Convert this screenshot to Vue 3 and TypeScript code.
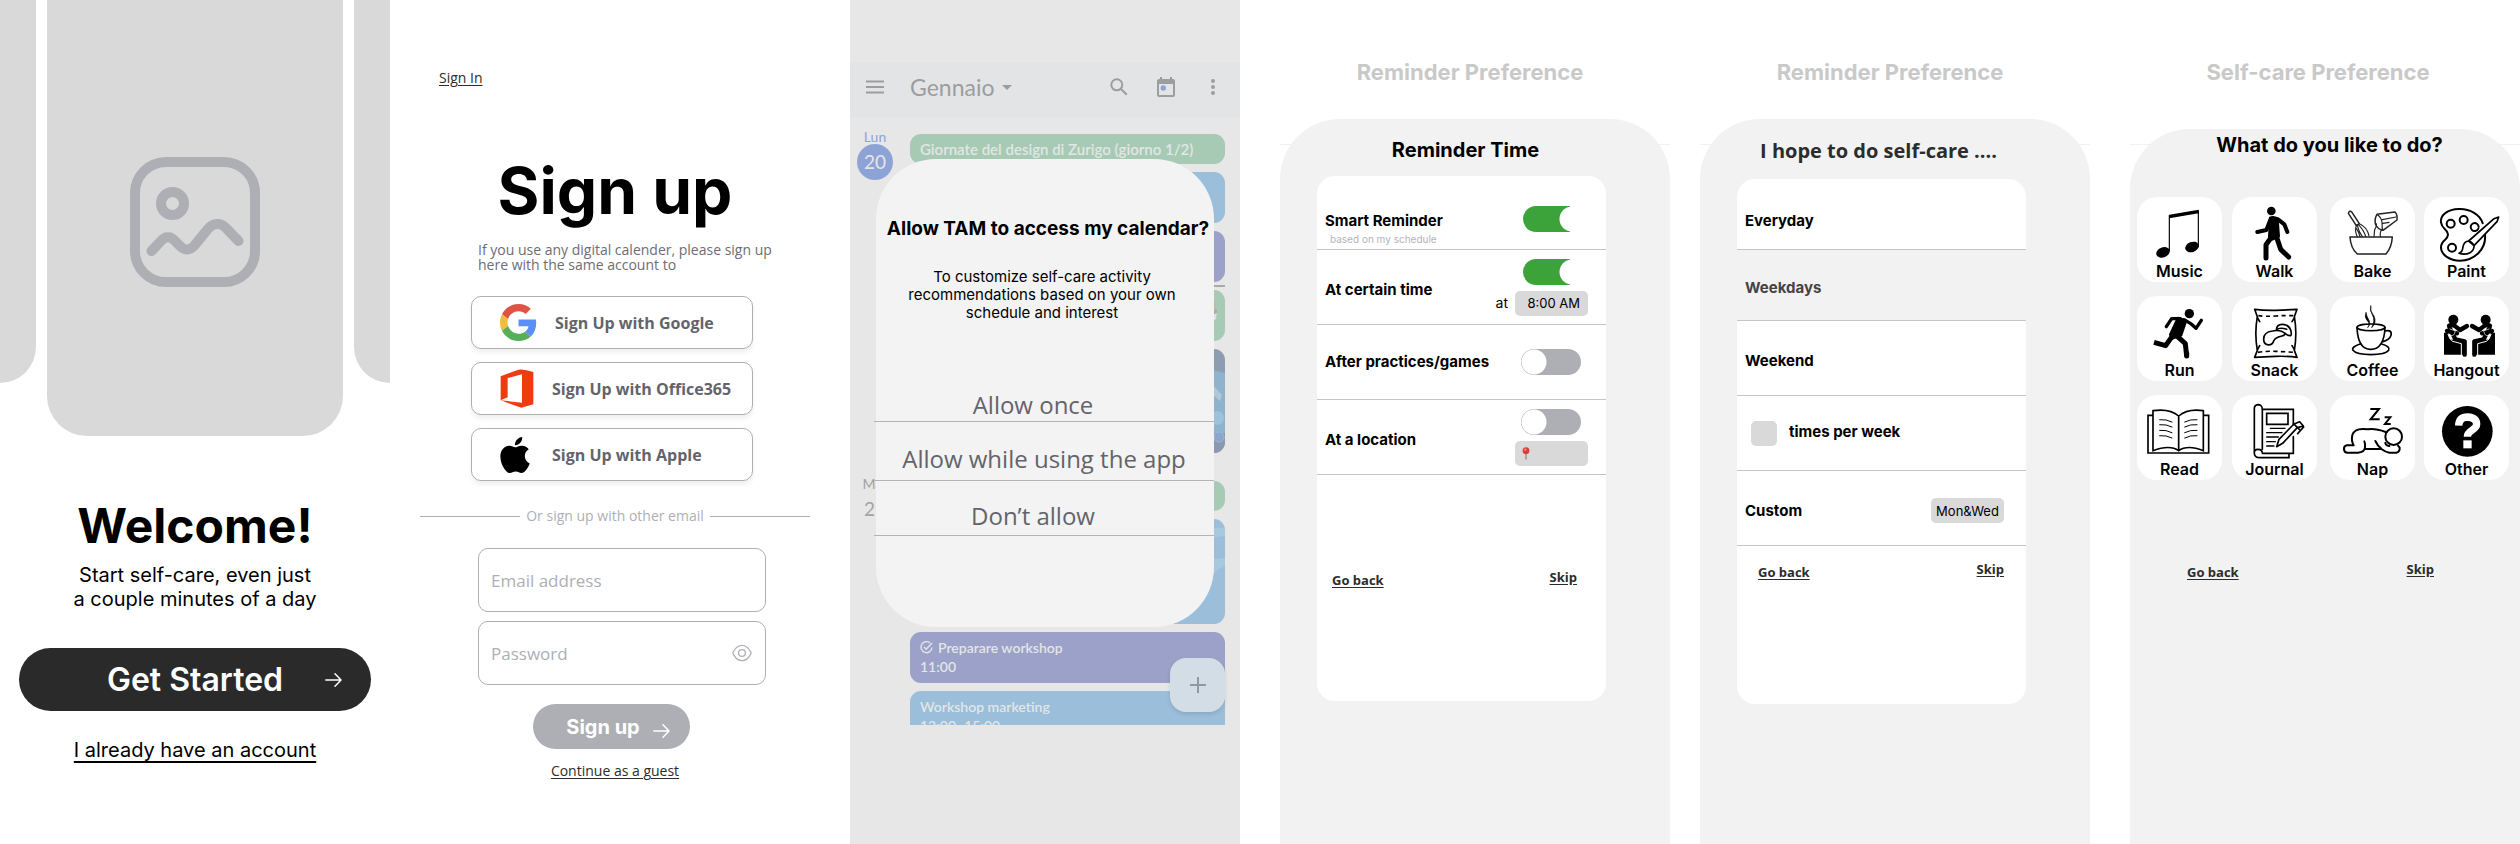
<script setup lang="ts">
import { ref } from 'vue'

interface Activity {
  name: string
  box: string
}

interface Reminder {
  id: string
  label: string
  note?: string
  on: boolean
  extra?: 'time' | 'place'
}

const reminders = ref<Reminder[]>([
  { id: 'smart', label: 'Smart Reminder', note: 'based on my schedule', on: true },
  { id: 'time', label: 'At certain time', on: true, extra: 'time' },
  { id: 'practice', label: 'After practices/games', on: false },
  { id: 'place', label: 'At a location', on: false, extra: 'place' },
])

const activities: Activity[] = [
  { name: 'Music', box: '51 51 255 195' },
  { name: 'Walk', box: '330 51 255 195' },
  { name: 'Bake', box: '630 51 255 195' },
  { name: 'Paint', box: '912 51 255 195' },
  { name: 'Run', box: '51 348 255 195' },
  { name: 'Snack', box: '336 348 255 195' },
  { name: 'Coffee', box: '630 348 255 195' },
  { name: 'Hangout', box: '912 348 255 195' },
  { name: 'Read', box: '51 645 255 195' },
  { name: 'Journal', box: '336 645 255 195' },
  { name: 'Nap', box: '630 645 255 195' },
  { name: 'Other', box: '912 645 255 195' },
]

const email = ref('')
const password = ref('')
const time = ref('8:00 AM')
const place = ref('')
const times = ref('')
const customDays = ref('Mon&Wed')
</script>

<template>
  <main class="board">
    <!-- Welcome -->
    <section class="screen welcome">
      <div class="carousel">
        <div class="slide side left"></div>
        <div class="slide main">
          <svg width="130" height="130" viewBox="0 0 130 130" fill="none" stroke="#aeafb5" stroke-width="10" stroke-linecap="round">
            <rect x="5" y="5" width="120" height="120" rx="31" />
            <circle cx="42.500" cy="46.500" r="11.500" />
            <path d="M21.500 94 L31 84 C35 79 41 79 45 84 L50 89 C54 93.500 60 93.500 64 89 L78 72 C83 65.500 91 65.500 96 71 L108.500 84" />
          </svg>
        </div>
        <div class="slide side right"></div>
      </div>
      <h1 class="hello">Welcome!</h1>
      <p class="lead">Start self-care, even just<br />a couple minutes of a day</p>
      <button class="start" type="button">
        <span class="start-label">Get Started</span>
        <svg class="arrow" width="17" height="16" viewBox="0 0 17 16" fill="none" stroke="#fff" stroke-width="1.500" stroke-linecap="round" stroke-linejoin="round">
          <path d="M.8 8H16M10 1.800 16 8l-6 6.200" />
        </svg>
      </button>
      <a class="have-account" href="#">I already have an account</a>
    </section>

    <!-- Sign up -->
    <section class="screen signup">
      <a class="small-link sign-in" href="#">Sign In</a>
      <h1 class="signup-title">Sign up</h1>
      <p class="hint">If you use any digital calender, please sign up<br />here with the same account to</p>
      <div class="providers">
        <button class="provider google" type="button">
          <svg width="37" height="37" viewBox="0 0 48 48">
            <path fill="#df5345" d="M24 9.500c3.540 0 6.710 1.220 9.210 3.600l6.850-6.850C35.900 2.380 30.470 0 24 0 14.620 0 6.510 5.380 2.560 13.220l7.980 6.190C12.430 13.720 17.740 9.500 24 9.500z" />
            <path fill="#5b90f4" d="M46.980 24.550c0-1.570-.15-3.090-.38-4.550H24v9.020h12.940c-.58 2.960-2.260 5.480-4.780 7.180l7.730 6c4.510-4.180 7.090-10.360 7.090-17.650z" />
            <path fill="#f3bb40" d="M10.530 28.590c-.48-1.450-.76-2.990-.76-4.590s.27-3.140.76-4.590l-7.980-6.190C.92 16.460 0 20.120 0 24c0 3.880.92 7.540 2.560 10.780l7.970-6.190z" />
            <path fill="#58ae57" d="M24 48c6.480 0 11.930-2.130 15.890-5.810l-7.730-6c-2.150 1.450-4.920 2.300-8.160 2.300-6.260 0-11.570-4.220-13.470-9.910l-7.980 6.190C6.510 42.620 14.620 48 24 48z" />
          </svg>
          <span>Sign Up with Google</span>
        </button>
        <button class="provider" type="button">
          <svg width="34" height="39" viewBox="302 1000 102 117">
            <path fill="#ee3b10" d="M304 1022 357 1002Q372 999 402 1009V1106L366 1116 304 1094 368 1101V1016L325 1027V1085L304 1094Z" />
          </svg>
          <span>Sign Up with Office365</span>
        </button>
        <button class="provider" type="button">
          <svg width="30" height="36" viewBox="2 0 20 24">
            <path d="M12.152 6.896c-.948 0-2.415-1.078-3.960-1.040-2.040.027-3.910 1.183-4.961 3.014-2.117 3.675-.546 9.103 1.519 12.090 1.013 1.454 2.208 3.090 3.792 3.039 1.520-.065 2.090-.987 3.935-.987 1.831 0 2.350.987 3.960.948 1.637-.026 2.676-1.480 3.676-2.948 1.156-1.688 1.636-3.325 1.662-3.415-.039-.013-3.182-1.221-3.220-4.857-.026-3.040 2.480-4.494 2.597-4.559-1.429-2.090-3.623-2.324-4.390-2.376-2-.156-3.675 1.090-4.610 1.090zM15.530 3.830c.843-1.012 1.400-2.427 1.245-3.830-1.207.052-2.662.805-3.532 1.818-.780.896-1.454 2.338-1.273 3.714 1.338.104 2.715-.688 3.559-1.701" />
          </svg>
          <span>Sign Up with Apple</span>
        </button>
      </div>
      <div class="divider"><span>Or sign up with other email</span></div>
      <form class="fields" @submit.prevent>
        <input v-model="email" class="field" type="email" placeholder="Email address" aria-label="Email address" />
        <div class="password">
          <input v-model="password" class="field" type="password" placeholder="Password" aria-label="Password" />
          <button class="eye" type="button" aria-label="Show password">
            <svg width="20" height="18" viewBox="0 0 20 18" fill="none" stroke="#aeafb5" stroke-width="1.300">
              <path d="M1.400 7.600C6 -.8 14 -.8 18.600 7.600Q19.400 9 18.600 10.400C14 18.800 6 18.800 1.400 10.400Q.6 9 1.400 7.600Z" />
              <circle cx="10" cy="9" r="3.400" />
            </svg>
          </button>
        </div>
        <button class="submit" type="submit">
          Sign up
          <svg class="arrow" width="17" height="16" viewBox="0 0 17 16" fill="none" stroke="#fff" stroke-width="1.500" stroke-linecap="round" stroke-linejoin="round">
            <path d="M.8 8H16M10 1.800 16 8l-6 6.200" />
          </svg>
        </button>
      </form>
      <a class="small-link guest" href="#">Continue as a guest</a>
    </section>

    <!-- Calendar access -->
    <section class="screen calendar">
      <header class="cal-bar">
        <button class="icon-btn menu" type="button" aria-label="Menu">
          <svg width="18" height="14" viewBox="0 0 18 14" stroke="#9c9d9e" stroke-width="2"><path d="M0 1.500h18M0 7h18M0 12.500h18" /></svg>
        </button>
        <button class="month" type="button">
          Gennaio
          <svg width="10" height="5" viewBox="0 0 10 5" fill="#9c9d9e"><path d="M0 0h10L5 5z" /></svg>
        </button>
        <button class="icon-btn" type="button" aria-label="Search">
          <svg width="18" height="18" viewBox="0 0 18 18" fill="none" stroke="#9c9d9e" stroke-width="2"><circle cx="6.800" cy="6.800" r="5.500" /><path d="m10.800 10.800 6 6" /></svg>
        </button>
        <button class="icon-btn" type="button" aria-label="Today">
          <svg width="18" height="20" viewBox="0 0 18 20"><path fill="#9c9d9e" fill-rule="evenodd" d="M3 0h2v2h8V0h2v2h1q2 0 2 2v14q0 2-2 2H2q-2 0-2-2V4q0-2 2-2h1zM2 7v11h14V7z" /><circle cx="6.300" cy="11" r="2.700" fill="#8ea3d8" /></svg>
        </button>
        <button class="icon-btn" type="button" aria-label="More">
          <svg width="4" height="16" viewBox="0 0 4 16" fill="#9c9d9e"><circle cx="2" cy="2" r="2" /><circle cx="2" cy="8" r="2" /><circle cx="2" cy="14" r="2" /></svg>
        </button>
      </header>
      <div class="agenda">
        <div class="day">
          <div class="date today"><span class="dow">Lun</span><span class="num">20</span></div>
          <div class="events">
            <div class="event green slim">Giornate del design di Zurigo (giorno 1/2)</div>
            <div class="event blue"></div>
            <div class="event purple now"></div>
            <div class="event green cake">
              <svg width="16" height="30" viewBox="0 0 16 30"><path d="M2 12h12l-1 9q-5 5-10 0z" fill="#dfe2e0" /><path d="M2 12q6-5 12 0v3q-6 3-12 0z" fill="#b9a7ad" /><path d="M11 4v5" stroke="#c9b27c" stroke-width="2" /></svg>
            </div>
            <div class="event photo">
              <svg width="60" height="104" viewBox="0 0 60 104"><path d="M0 0h60v104H0z" fill="#8c9db2" /><path d="M36 18l24 6v70H36z" fill="#8fb2cd" /><path d="M48 36l9 10-2 6-9-8z" fill="#afc8d8" /><path d="M42 84h18v20H42z" fill="#8999ae" /><circle cx="54" cy="88" r="5" fill="#8ba5cb" stroke="#96bad8" /><circle cx="52" cy="69" r="7" fill="#9cc3dc" /></svg>
            </div>
          </div>
        </div>
        <div class="day">
          <div class="date"><span class="dow">Mar</span><span class="num">21</span></div>
          <div class="events">
            <div class="event green slim"></div>
            <div class="event blue tall">
              <svg width="40" height="105" viewBox="0 0 40 105"><path d="M0 12Q25 8 40 9v8Q20 20 0 18z" fill="#a8c8dd" /><path d="M0 50Q20 40 40 39v8Q20 56 0 90z" fill="#a8c8dd" /></svg>
            </div>
            <div class="event purple">
              <span class="task">
                <svg width="13" height="13" viewBox="0 0 13 13" fill="none" stroke="#e2e4ea" stroke-width="1.400"><path d="M10 1.900A5.500 5.500 0 1 0 12 6.500M4 6l2.200 2.300L12 2" /></svg>
                Preparare workshop
              </span>
              <span>11:00</span>
            </div>
            <div class="event blue cut">
              <span>Workshop marketing</span>
              <span>12:00–15:00</span>
            </div>
          </div>
        </div>
        <button class="fab" type="button" aria-label="Add event">
          <svg width="16" height="16" viewBox="0 0 16 16" stroke="#9199a0" stroke-width="2"><path d="M8 0v16M0 8h16" /></svg>
        </button>
      </div>

      <div class="dialog" role="dialog" aria-labelledby="access-title">
        <h2 id="access-title" class="dialog-title">Allow TAM to access my calendar?</h2>
        <p class="dialog-text">To customize self-care activity<br />recommendations based on your own<br />schedule and interest</p>
        <div class="choices">
          <button type="button" class="short">Allow once</button>
          <button type="button">Allow while using the app</button>
          <button type="button" class="short">Don’t allow</button>
        </div>
      </div>
    </section>

    <!-- Reminder time -->
    <section class="screen prefs">
      <h2 class="section-name">Reminder Preference</h2>
      <div class="sheet">
        <h3 class="sheet-title time-title">Reminder Time</h3>
        <div class="card">
          <div v-for="r in reminders" :key="r.id" class="row" :class="{ first: r.note, detailed: r.extra }">
            <div class="row-text">
              <label :for="r.id">{{ r.label }}</label>
              <small v-if="r.note">{{ r.note }}</small>
            </div>
            <div class="controls">
              <input :id="r.id" v-model="r.on" class="toggle" type="checkbox" role="switch" />
              <label v-if="r.extra === 'time'" class="at">at <input v-model="time" class="chip time" type="text" /></label>
              <label v-if="r.extra === 'place'" class="place">
                <svg width="8" height="13" viewBox="0 0 8 13"><path d="M3.500 7h1v5.500h-1z" fill="#7d6f68" /><circle cx="4" cy="3.700" r="3.400" fill="#dd3d36" /><circle cx="3.300" cy="2.700" r="1.100" fill="#f39a94" /></svg>
                <input v-model="place" class="chip" type="text" aria-label="Location" />
              </label>
            </div>
          </div>
          <nav class="card-nav late">
            <a class="bold-link back" href="#">Go back</a>
            <a class="bold-link" href="#">Skip</a>
          </nav>
        </div>
      </div>
    </section>

    <!-- Reminder frequency -->
    <section class="screen prefs">
      <h2 class="section-name">Reminder Preference</h2>
      <div class="sheet">
        <h3 class="sheet-title frequency-title">I hope to do self-care ....</h3>
        <div class="card frequency">
          <button class="row option" type="button">Everyday</button>
          <button class="row option selected" type="button">Weekdays</button>
          <button class="row option" type="button">Weekend</button>
          <label class="row times"><input v-model="times" class="chip count" type="text" /><span>times per week</span></label>
          <label class="row custom"><span>Custom</span><input v-model="customDays" class="chip" type="text" /></label>
          <nav class="card-nav">
            <a class="bold-link back" href="#">Go back</a>
            <a class="bold-link" href="#">Skip</a>
          </nav>
        </div>
      </div>
    </section>

    <!-- Activities -->
    <section class="screen prefs">
      <h2 class="section-name">Self-care Preference</h2>
      <div class="sheet activities">
        <h3 class="sheet-title">What do you like to do?</h3>
        <div class="tiles">
          <button v-for="a in activities" :key="a.name" class="tile" type="button">
            <svg width="85" height="65" :viewBox="a.box" fill="none" stroke="#000" stroke-width="5" stroke-linecap="round" stroke-linejoin="round">
              <g v-if="a.name === 'Music'">
                <path d="M148 104 236 89V100L148 115Z" fill="#000" stroke="none" />
                <path d="M148 106V212M235 92V200" stroke-width="3.500" />
                <ellipse cx="129" cy="217" rx="21" ry="15" transform="rotate(-22 129 217)" fill="#000" stroke="none" />
                <ellipse cx="216" cy="201" rx="21" ry="15" transform="rotate(-22 216 201)" fill="#000" stroke="none" />
              </g>
              <g v-else-if="a.name === 'Walk'">
                <circle cx="448" cy="93" r="13" fill="#000" stroke="none" />
                <path d="M443 112Q456 107 468 115L472 170 452 180 440 172Z" fill="#000" stroke-width="4" />
                <path d="M446 117 433 150 406 156M468 118 487 133 496 156" stroke-width="12" />
                <path d="M448 172 432 194V234M464 172 476 208 500 231" stroke-width="15" />
              </g>
              <g v-else-if="a.name === 'Bake'" stroke="#222" stroke-width="4.500">
                <path d="M690 171H817Q815 203 798 222H712Q692 205 690 171Z" />
                <path d="M686 97Q690 91 696 97L718 131 709 137 687 103Q684 100 686 97Z" />
                <path d="M709 137Q703 152 712 170M718 131Q742 141 747 168M712 136Q716 155 727 170M715 134Q731 150 737 169M710 146Q718 160 720 170" stroke-width="3.500" />
                <path d="M771 103 825 96Q833 104 831 120L789 151Q774 149 766 132Q763 116 771 103Z" />
                <path d="M772 104Q783 110 786 126L787 149M787 119 828 111M789 130 807 127M768 130Q772 136 764 149L762 169M788 146Q779 153 781 169" stroke-width="3.500" />
              </g>
              <g v-else-if="a.name === 'Paint'" stroke-width="6">
                <path d="M1088 130C1081 104 1050 86 1017 87C982 88 960 106 963 127C966 149 983 146 984 163C985 181 963 179 963 202C963 225 990 242 1020 242C1064 242 1099 206 1095 165" />
                <circle cx="992" cy="131" r="12" /><circle cx="1031" cy="120" r="12" /><path d="M1075 146A12 12 0 1 1 1076 141" /><circle cx="996" cy="203" r="12" />
                <path d="M1046 183 1122 116 1136 111 1131 125 1062 197M1046 183Q1032 184 1029 200Q1028 216 1017 220Q1035 226 1050 218Q1063 211 1062 197ZM1046 183Q1058 187 1062 197" stroke-width="5" />
              </g>
              <g v-else-if="a.name === 'Run'">
                <circle cx="208" cy="401" r="14" fill="#000" stroke="none" />
                <path d="M174 414 198 422 183 466 158 475 151 464Z" fill="#000" stroke-width="8" />
                <path d="M181 416H155L139 440M192 419 211 430 228 445 244 421" stroke-width="10" />
                <path d="M158 467 137 497 102 487M172 469 196 491 200 528" stroke-width="15" stroke-linecap="butt" />
                <path d="M200 520V528" stroke-width="15" />
              </g>
              <g v-else-if="a.name === 'Snack'">
                <path d="M404 388Q434 392 467 391T531 388L523 410Q532 461 523 511L531 532Q503 528 467 529T404 532L412 511Q403 461 412 410Z" />
                <path d="M415 407Q434 410 467 408T520 407M414 517Q440 513 467 514T522 517" stroke-dasharray="13 10" stroke-width="5" stroke-linecap="butt" />
                <path d="M413 414 419 425M523 414 516 425M413 508 419 497M523 508 516 497" stroke-width="5" />
                <path d="M457 453Q482 448 496 461C494 472 471 465 462 481C456 501 431 499 431 477C431 461 443 455 457 453Z" />
                <path d="M469 450C470 427 503 428 512 450Q516 464 512 467Q503 467 496 461M470 449Q480 441 500 448" />
              </g>
              <g v-else-if="a.name === 'Coffee'">
                <ellipse cx="753" cy="442" rx="42" ry="10" />
                <path d="M711 443Q714 509 753 508T795 443M795 453Q817 448 813 466Q809 480 789 485" />
                <path d="M722 491Q693 501 699 511C712 528 794 528 806 511Q812 500 785 492" />
                <path d="M738 398Q732 412 742 422T743 443Q754 430 745 417Q740 409 738 398ZM752 378Q748 390 757 404Q767 421 755 443Q771 429 762 408Q749 394 752 378Z" fill="#000" stroke-width="2" />
                <path d="M733 444Q744 452 766 446" stroke="#fff" stroke-width="2" />
              </g>
              <g v-else-if="a.name === 'Hangout'">
                <g v-for="side in 2" :key="side" :transform="side === 2 ? 'translate(2097 0) scale(-1 1)' : undefined">
                  <circle cx="1000" cy="419" r="15" fill="#000" stroke="none" />
                  <path d="M972 458H984L990 478 1030 485V524H972Z" fill="#000" stroke="none" />
                  <path d="M987 437Q1000 431 1010 442L1020 450 1041 438M988 442 1006 478 1034 484V524" stroke-width="13" />
                  <path d="M981 453 1011 460" stroke-width="13" />
                  <path d="M984 463Q988 479 998 484L1024 491V524" stroke="#fff" stroke-width="3" />
                  <path d="M990 447 1007 453M993 467Q1004 468 1005 455" stroke="#fff" stroke-width="2" />
                </g>
              </g>
              <g v-else-if="a.name === 'Read'">
                <path d="M99 706H84V819H266V706H250M99 812V692Q150 685 176 708Q202 685 250 692V812Q202 793 176 812Q150 793 99 812ZM176 708V812" stroke-linejoin="miter" />
                <path d="M119 719Q139 717 156 726M119 734Q139 732 156 741M119 751Q139 749 156 758M119 767Q139 765 156 774M231 719Q211 717 194 726M231 734Q211 732 194 741M231 751Q211 749 194 758M231 767Q211 765 194 774" stroke-width="3" />
              </g>
              <g v-else-if="a.name === 'Journal'">
                <path d="M426 688H520V735M520 770V820H427M427 808V686Q425 674 414 674Q402 675 403 688V817Q402 831 416 833H507V822M403 820Q402 808 414 808Q427 808 427 820" stroke-linejoin="miter" />
                <path d="M440 700H504V733H440Z" stroke-linejoin="miter" />
                <path d="M451 745H495M440 758H486M440 771H475M440 785H466M440 798H462" stroke-width="4" />
                <path d="M470 800 477 778 522 732 532 743 488 790ZM522 732 539 725 550 738 532 743M551 741 533 761M528 738 538 748" stroke-width="5" />
              </g>
              <g v-else-if="a.name === 'Nap'" stroke-width="6">
                <circle cx="821" cy="770" r="25" />
                <path d="M797 756Q766 745 744 748Q704 742 697 765Q693 782 701 796H680Q671 798 672 808T682 818H714Q733 817 735 803Q737 792 733 784M736 807H784Q796 816 808 818H830Q840 815 839 803L834 797M766 783Q773 798 783 805M796 788Q796 796 808 798" />
                <path d="M751 687H777L752 718H779M794 712H811L795 732H812" stroke-linecap="butt" stroke-linejoin="miter" />
              </g>
              <g v-else>
                <circle cx="1042" cy="754" r="76" fill="#000" stroke="none" />
                <path d="M1016 737Q1017 711 1043 711Q1070 713 1070 733C1070 750 1042 750 1042 770" stroke="#fff" stroke-width="22" stroke-linecap="butt" />
                <path d="M1030 781H1055V805H1030Z" fill="#fff" stroke="none" />
              </g>
            </svg>
            <span>{{ a.name }}</span>
          </button>
        </div>
        <nav class="card-nav tiles-nav">
          <a class="bold-link back" href="#">Go back</a>
          <a class="bold-link" href="#">Skip</a>
        </nav>
      </div>
    </section>
  </main>
</template>

<style>
body {
  margin: 0;
  background: #fff;
}
</style>

<style scoped>
.board {
  display: flex;
  min-height: 100vh;
  font-family: Inter, "Liberation Sans", sans-serif;
  color: #000;
}
.board * {
  box-sizing: border-box;
}
h1, h2, h3, p {
  margin: 0;
}
button, input {
  margin: 0;
  padding: 0;
  border: 0;
  background: none;
  font: inherit;
  color: inherit;
}
svg {
  display: block;
  flex: none;
}
.screen {
  position: relative;
  display: flex;
  flex: 1 1 0;
  flex-direction: column;
  min-width: 0;
}
.signup, .screen:nth-child(5) {
  margin-left: 30px;
}
.calendar, .screen:nth-child(4), .screen:nth-child(6) {
  margin-left: 40px;
}

/* Welcome */
.welcome {
  align-items: center;
}
.carousel {
  display: flex;
  gap: 11px;
  width: 100%;
}
.slide {
  background: #d9d9d9;
}
.slide.main {
  display: flex;
  flex: 1;
  align-items: center;
  justify-content: center;
  height: 436px;
  padding-top: 8px;
  border-radius: 0 0 40px 40px;
}
.slide.side {
  width: 36px;
  height: 383px;
}
.slide.left {
  border-radius: 0 0 38px 0;
}
.slide.right {
  border-radius: 0 0 0 38px;
}
.hello {
  margin-top: 61px;
  font-size: 48px;
  line-height: 58px;
  font-weight: 700;
}
.lead {
  margin-top: 8px;
  font-size: 20px;
  line-height: 24px;
  text-align: center;
}
.start {
  display: grid;
  grid-template-columns: 1fr auto 1fr;
  align-items: center;
  align-self: stretch;
  height: 63px;
  margin: 37px 19px 27px;
  border-radius: 32px;
  background: #2a2a2a;
  color: #fff;
}
.start-label {
  grid-column: 2;
  font-size: 32px;
  line-height: 40px;
  font-weight: 600;
}
.start .arrow {
  justify-self: end;
  margin-right: 29px;
}
.have-account {
  font-size: 20px;
  line-height: 24px;
  color: #000;
  text-underline-offset: 4px;
}

/* Sign up */
.signup {
  font-family: "Open Sans", "Noto Sans", sans-serif;
}
.small-link {
  font-size: 14px;
  line-height: 16px;
  color: #2c2c2c;
  text-underline-offset: 2px;
}
.sign-in {
  align-self: flex-start;
  margin: 70px 0 0 19px;
}
.signup-title {
  margin-top: 66px;
  font-family: Inter, sans-serif;
  font-size: 64px;
  line-height: 77px;
  font-weight: 700;
  text-align: center;
}
.hint {
  margin: 13px 0 24px 58px;
  font-size: 14px;
  line-height: 15px;
  color: #6c6d75;
  white-space: nowrap;
}
.providers {
  display: flex;
  flex-direction: column;
  gap: 13px;
  margin: 0 57px 0 51px;
}
.provider {
  display: flex;
  align-items: center;
  height: 53px;
  padding-left: 28px;
  border: 1px solid #aeafb5;
  border-radius: 10px;
  background: #fff;
  box-shadow: 0 4px 4px rgba(0, 0, 0, 0.06);
  font-size: 16px;
  line-height: 20px;
  font-weight: 700;
  color: #63646b;
  white-space: nowrap;
}
.provider svg {
  margin-right: 18px;
}
.provider:last-child svg {
  margin-right: 22px;
}
.divider {
  display: flex;
  align-items: center;
  gap: 6px;
  margin-top: 27px;
  font-size: 14px;
  line-height: 16px;
  color: #aeafb5;
  white-space: nowrap;
}
.divider::before, .divider::after {
  flex: 1;
  height: 1px;
  background: #aeafb5;
  content: "";
}
.fields {
  display: flex;
  flex-direction: column;
  gap: 9px;
  margin: 24px 44px 0 58px;
}
.field {
  display: block;
  width: 100%;
  height: 64px;
  padding: 0 12px;
  border: 1px solid #aeafb5;
  border-radius: 10px;
  font-size: 17px;
  color: #2c2c2c;
}
.field::placeholder {
  color: #aeafb5;
  opacity: 1;
}
.password {
  position: relative;
}
.eye {
  position: absolute;
  top: 23px;
  right: 14px;
}
.submit {
  display: flex;
  align-items: center;
  align-self: center;
  gap: 13px;
  height: 45px;
  margin: 10px 21px 0 0;
  padding: 0 20px 0 33px;
  border-radius: 23px;
  background: #aeafb5;
  font-family: Inter, sans-serif;
  font-size: 20px;
  font-weight: 700;
  color: #fff;
}
.submit .arrow {
  margin-top: 8px;
}
.guest {
  align-self: center;
  margin-top: 14px;
}

/* Calendar */
.calendar {
  padding-top: 63px;
  background: #e7e7e7;
  font-family: Lato, sans-serif;
}
.cal-bar {
  display: flex;
  align-items: center;
  gap: 36px;
  height: 55px;
  padding: 0 25px 7px 16px;
  background: #e3e4e6;
}
.month {
  display: flex;
  align-items: center;
  gap: 8px;
  margin: 0 auto 0 -10px;
  font-size: 23px;
  line-height: 26px;
  color: #9c9d9e;
}
.cal-bar .icon-btn:nth-child(4) {
  margin-left: -7px;
}
.agenda {
  position: relative;
  display: flex;
  flex-direction: column;
  gap: 24px;
  padding: 12px 15px 0 0;
}
.day {
  display: flex;
}
.date {
  display: flex;
  flex: none;
  flex-direction: column;
  align-items: center;
  width: 50px;
  margin-right: 10px;
  color: #a2a2a3;
}
.dow {
  font-size: 14px;
  line-height: 14px;
}
.num {
  width: 36px;
  height: 36px;
  border-radius: 50%;
  font-size: 19px;
  line-height: 36px;
  text-align: center;
}
.today {
  color: #8ea3d5;
}
.today .num {
  background: #8ea3d5;
  color: #e5e6ea;
}
.events {
  display: flex;
  flex: 1;
  flex-direction: column;
  gap: 8px;
  padding-top: 4px;
}
.event {
  position: relative;
  display: flex;
  flex-direction: column;
  align-items: flex-start;
  height: 51px;
  padding: 6px 10px;
  border-radius: 11px;
  font-size: 14px;
  line-height: 19px;
  font-weight: 600;
  color: #e2e6e6;
}
.green {
  background: #a6cab3;
}
.blue {
  background: #9bbedb;
}
.purple {
  background: #9ba1c8;
}
.slim {
  height: 30px;
  padding-top: 5px;
  font-size: 15px;
  line-height: 20px;
}
.tall {
  align-items: flex-end;
  height: 105px;
  padding: 0;
  overflow: hidden;
}
.photo {
  align-items: flex-end;
  height: 104px;
  padding: 0;
  overflow: hidden;
}
.cake {
  align-items: flex-end;
  padding: 8px 6px;
}
.now::after {
  position: absolute;
  right: 0;
  bottom: -5px;
  left: 0;
  height: 2px;
  background: #aaa;
  content: "";
}
.task {
  display: flex;
  align-items: center;
  gap: 5px;
}
.cut {
  height: 34px;
  border-radius: 11px 11px 0 0;
  overflow: hidden;
}
.fab {
  position: absolute;
  right: 15px;
  bottom: 13px;
  display: flex;
  align-items: center;
  justify-content: center;
  width: 55px;
  height: 54px;
  border-radius: 16px;
  background: #d3dde6;
  box-shadow: 0 2px 4px rgba(0, 0, 0, 0.12);
}
.dialog {
  position: absolute;
  top: 159px;
  right: 26px;
  left: 26px;
  padding: 58px 0 91px;
  border-radius: 60px;
  background: #f3f3f3;
  font-family: Inter, sans-serif;
  text-align: center;
}
.dialog-title {
  padding-left: 6px;
  font-size: 19px;
  line-height: 24px;
  font-weight: 700;
  white-space: nowrap;
}
.dialog-text {
  margin: 27px 6px 50px 0;
  font-size: 15px;
  line-height: 18px;
  white-space: nowrap;
}
.choices {
  display: flex;
  flex-direction: column;
  margin-left: -2px;
}
.choices button {
  height: 59px;
  padding-top: 16px;
  border-bottom: 1px solid #b4b4b4;
  font-family: "Open Sans", "Noto Sans", sans-serif;
  font-size: 24px;
  line-height: 28px;
  color: #63646b;
}
.choices .short {
  height: 55px;
  padding-right: 22px;
}
.choices .short:first-child {
  height: 50px;
}

/* Preference screens */
.prefs::before {
  position: absolute;
  top: 144px;
  right: 0;
  left: 0;
  height: 1px;
  background: #f1f1f1;
  content: "";
}
.section-name {
  padding: 59px 10px 33px 0;
  font-size: 22px;
  line-height: 27px;
  font-weight: 700;
  color: #c9c9c9;
  text-align: center;
}
.sheet {
  position: relative;
  flex: 1;
  padding: 19px 64px 40px 37px;
  border-radius: 60px 60px 0 0;
  background: #f2f2f2;
}
.sheet-title {
  font-size: 20px;
  line-height: 24px;
  font-weight: 700;
  text-align: center;
  white-space: nowrap;
}
.time-title {
  padding-left: 8px;
  margin-bottom: 14px;
}
.frequency-title {
  padding: 1px 6px 0 0;
  margin-bottom: 16px;
  font-family: "Open Sans", "Noto Sans", sans-serif;
  color: #2c2c2c;
}
.card {
  border-radius: 18px;
  background: #fff;
  font-weight: 700;
}
.row {
  display: flex;
  align-items: center;
  justify-content: space-between;
  width: 100%;
  height: 75px;
  padding: 0 18px 0 8px;
  border-bottom: 1px solid #c4c4c4;
  font-size: 15px;
  line-height: 20px;
  text-align: left;
}
.row.first {
  align-items: flex-end;
  height: 74px;
}
.row-text {
  display: flex;
  flex-direction: column;
  white-space: nowrap;
}
.detailed .row-text {
  padding-top: 6px;
}
.row-text small {
  margin: 2px 0 4px 5px;
  font-size: 10px;
  line-height: 12px;
  font-weight: 400;
  color: #b4b4b9;
}
.controls {
  display: flex;
  flex-direction: column;
  align-items: flex-end;
  gap: 6px;
}
.first .controls {
  padding-bottom: 17px;
}
.toggle {
  width: 60px;
  height: 26px;
  margin-right: 7px;
  border-radius: 13px;
  background: radial-gradient(circle at 13px 13px, #fff 12px, #aeafb5 13px);
  appearance: none;
}
.toggle:checked {
  margin-right: 5px;
  background: radial-gradient(circle at 49px 13px, #fff 12px, transparent 13px), linear-gradient(90deg, #3ba33a 47px, #fff 47px);
}
.chip {
  display: block;
  width: 73px;
  height: 25px;
  border-radius: 5px;
  background: #d9d9d9;
  font-size: 13px;
  font-weight: 400;
  text-align: center;
}
.chip.time {
  padding: 0 8px 0 0;
  text-align: right;
}
.at {
  display: flex;
  align-items: center;
  gap: 7px;
  font-size: 14px;
  font-weight: 400;
}
.place {
  position: relative;
}
.place svg {
  position: absolute;
  top: 6px;
  left: 7px;
}
.card-nav {
  display: flex;
  align-items: flex-start;
  justify-content: space-between;
  padding: 16px 22px 124px 21px;
}
.card-nav.late {
  padding: 95px 29px 113px 15px;
}
.bold-link {
  font-family: "Open Sans", "Noto Sans", sans-serif;
  font-size: 13px;
  line-height: 15px;
  font-weight: 700;
  color: #2c2c2c;
  text-underline-offset: 2px;
}
.back {
  margin-top: 3px;
}
.option {
  padding-top: 5px;
}
.option:first-child {
  height: 71px;
  padding-top: 14px;
}
.option.selected {
  height: 71px;
  background: #f2f2f2;
  color: #444;
}
.frequency {
  overflow: hidden;
}
.times {
  justify-content: flex-start;
  gap: 12px;
  padding-left: 14px;
}
.times span {
  padding-bottom: 3px;
}
.count {
  width: 26px;
}
.custom {
  padding: 5px 22px 0 8px;
}

/* Activities */
.screen:last-child .section-name {
  padding: 59px 14px 43px 0;
}
.activities {
  padding: 4px 0 40px 7px;
}
.activities .sheet-title {
  padding-left: 2px;
}
.tiles {
  display: grid;
  grid-template-columns: 95fr 98fr 94fr 96fr;
  row-gap: 14px;
  margin-top: 40px;
}
.tile {
  display: flex;
  flex-direction: column;
  align-items: center;
  width: 85px;
  height: 85px;
  border-radius: 20px;
  background: #fff;
  font-size: 16px;
  line-height: 20px;
  font-weight: 600;
}
.tile span {
  margin-top: -1px;
}
.tiles-nav {
  padding: 82px 86px 0 50px;
}
</style>
